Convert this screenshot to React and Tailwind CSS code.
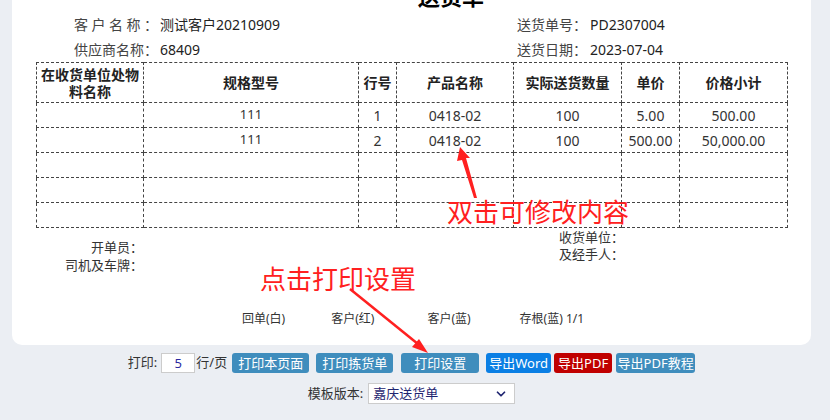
import React from 'react';
import { ChevronDown } from 'lucide-react';

const rows = [
  ['', '111', '1', '0418-02', '100', '5.00', '500.00'],
  ['', '111', '2', '0418-02', '100', '500.00', '50,000.00'],
  ['', '', '', '', '', '', ''],
  ['', '', '', '', '', '', ''],
  ['', '', '', '', '', '', ''],
];

const widths = ['w-[107px]', 'w-[215px]', 'w-[38px]', 'w-[117px]', 'w-[108px]', 'w-[58px]', 'w-[108px]'];
const heads = ['在收货单位处物料名称', '规格型号', '行号', '产品名称', '实际送货数量', '单价', '价格小计'];

function Btn({ children, className }) {
  return (
    <button className={`h-[20px] rounded-[3px] text-white text-[13px] leading-[20px] text-center ${className}`}>
      {children}
    </button>
  );
}

export default function App() {
  return (
    <div className="relative w-[830px] h-[420px] overflow-hidden bg-[#ebeef3] text-[#333] font-['Noto_Sans','Noto_Sans_CJK_SC',sans-serif]">
      <div className="w-[823px]">
        {/* 单据 */}
        <div className="mx-[12px] w-[799px] h-[345px] bg-white rounded-b-[10px] overflow-hidden">
          <div className="-mt-[18px] h-[28px] leading-[28px] text-[22px] font-bold text-black pl-[406px]">送货单</div>

          <div className="mt-[2px] flex h-[25px] items-center text-[14px] pl-[62px]">
            <div className="w-[84px] text-[#444] [text-align-last:justify]">客户名称：</div>
            <div className="ml-[2px] w-[357px] text-[#222]">测试客户20210909</div>
            <div className="w-[70px] text-[#444]">送货单号：</div>
            <div className="ml-[3px] text-[#222]">PD2307004</div>
          </div>
          <div className="flex h-[25px] items-center text-[14px] pl-[62px]">
            <div className="w-[84px] text-[#444] [text-align-last:justify]">供应商名称：</div>
            <div className="ml-[2px] w-[357px] text-[#222]">68409</div>
            <div className="w-[70px] text-[#444]">送货日期：</div>
            <div className="ml-[3px] text-[#222]">2023-07-04</div>
          </div>

          <table className="ml-[24px] w-[751px] border-collapse table-fixed">
            <thead>
              <tr className="h-[40px]">
                {heads.map((h, i) => (
                  <th
                    key={i}
                    className={`${widths[i]} border border-dashed border-[#444] text-[14px] leading-[17px] font-bold text-[#222] px-[3px] align-middle`}
                  >
                    {h}
                  </th>
                ))}
              </tr>
            </thead>
            <tbody>
              {rows.map((r, ri) => (
                <tr key={ri} className="h-[25px]">
                  {r.map((c, ci) => (
                    <td
                      key={ci}
                      className={`border border-dashed border-[#444] text-center p-0 ${ci === 1 ? 'text-[13px]' : 'text-[14px]'} text-[#333]`}
                    >
                      {c}
                    </td>
                  ))}
                </tr>
              ))}
            </tbody>
          </table>

          <div className="flex text-[13px] text-[#333]">
            <div className="w-[131px] text-right pt-[10px] leading-[18px]">
              <div>开单员：</div>
              <div>司机及车牌：</div>
            </div>
            <div className="ml-[416px] pt-[1px] leading-[17px]">
              <div>收货单位：</div>
              <div>及经手人：</div>
            </div>
          </div>

          <div className="mt-[36px] flex text-[12px] text-[#333] pl-[230px]">
            <span>回单(白)</span>
            <span className="ml-[46px]">客户(红)</span>
            <span className="ml-[53px]">客户(蓝)</span>
            <span className="ml-[49px]">存根(蓝) 1/1</span>
          </div>
        </div>

        {/* 操作栏 */}
        <div className="mt-[8px] flex items-center justify-center text-[13px] text-[#333]">
          <span>打印:</span>
          <input
            readOnly
            value="5"
            className="ml-[4px] w-[34px] h-[20px] border border-[#ccc] bg-white text-center text-[13px] text-[#2a2aa0] outline-none"
          />
          <span className="ml-[1px]">行/页</span>
          <Btn className="ml-[5px] w-[77px] bg-[#3f8dbd]">打印本页面</Btn>
          <Btn className="ml-[7px] w-[77px] bg-[#3f8dbd]">打印拣货单</Btn>
          <Btn className="ml-[8px] w-[78px] bg-[#3f8dbd]">打印设置</Btn>
          <Btn className="ml-[7px] w-[65px] bg-[#0b7fe4]">导出Word</Btn>
          <Btn className="ml-[3px] w-[58px] bg-[#c00000]">导出PDF</Btn>
          <Btn className="ml-[4px] w-[79px] bg-[#3f8dbd]">导出PDF教程</Btn>
        </div>
        <div className="mt-[10px] flex items-center justify-center text-[13px] text-[#333]">
          <span>模板版本:</span>
          <div className="ml-[5px] w-[147px] h-[21px] border border-[#ccc] bg-white flex items-center pl-[4px] pr-[6px]">
            <span className="flex-1 text-[#1e2470]">嘉庆送货单</span>
            <ChevronDown size={14} strokeWidth={3} className="text-[#1e2470]" />
          </div>
        </div>
      </div>

      {/* 标注 */}
      <div className="absolute left-[447px] top-[199px] text-[26px] leading-[26px] text-[#ff2020] whitespace-nowrap">双击可修改内容</div>
      <div className="absolute left-[260px] top-[266px] text-[26px] leading-[26px] text-[#ff2020] whitespace-nowrap">点击打印设置</div>
      <svg className="absolute left-0 top-0 pointer-events-none" width="830" height="420">
        <polygon points="460,147 470,158 466,158 477,198 474,198 462,160 457,161" fill="#ff2020" />
        <line x1="350" y1="289" x2="418" y2="344" stroke="#ff2020" strokeWidth="2.5" />
        <polygon points="428,353 412,347 419,339" fill="#ff2020" />
      </svg>
    </div>
  );
}
